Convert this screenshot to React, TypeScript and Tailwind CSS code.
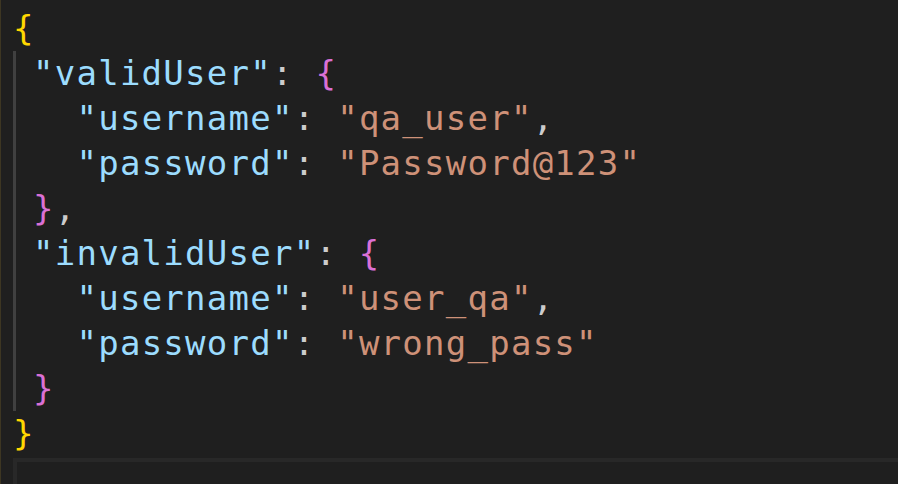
const mono = { fontFamily: '"DejaVu Sans Mono", "Liberation Mono", monospace' };

function Key({ children }: { children: string }) {
  return <span className="text-[#9cdcfe]">"{children}"</span>;
}

function Str({ children }: { children: string }) {
  return <span className="text-[#ce9178]">"{children}"</span>;
}

function P({ children }: { children: string }) {
  return <span className="text-[#cccccc]">{children}</span>;
}

function Line({ children, indent = "" }: { children: React.ReactNode; indent?: string }) {
  return (
    <div className="h-[45px] leading-[45px] whitespace-pre">
      {indent}
      {children}
    </div>
  );
}

export default function App() {
  return (
    <div className="w-[898px] h-[484px] bg-[#1f1f1f] flex overflow-hidden" style={mono}>
      <div className="w-px h-full bg-[#3d3622]" />
      <div className="flex-1 flex flex-col pt-[6px] text-[34px] tracking-[1.25px]">
        <div className="pl-[12px]">
          <Line>
            <span className="text-[#ffd700]">{"{"}</span>
          </Line>
        </div>
        <div className="ml-[12px] border-l-[3px] border-[#404040] pl-[17px]">
          <Line>
            <Key>validUser</Key>
            <P>: </P>
            <span className="text-[#da70d6]">{"{"}</span>
          </Line>
          <Line indent="  ">
            <Key>username</Key>
            <P>: </P>
            <Str>qa_user</Str>
            <P>,</P>
          </Line>
          <Line indent="  ">
            <Key>password</Key>
            <P>: </P>
            <Str>Password@123</Str>
          </Line>
          <Line>
            <span className="text-[#da70d6]">{"}"}</span>
            <P>,</P>
          </Line>
          <Line>
            <Key>invalidUser</Key>
            <P>: </P>
            <span className="text-[#da70d6]">{"{"}</span>
          </Line>
          <Line indent="  ">
            <Key>username</Key>
            <P>: </P>
            <Str>user_qa</Str>
            <P>,</P>
          </Line>
          <Line indent="  ">
            <Key>password</Key>
            <P>: </P>
            <Str>wrong_pass</Str>
          </Line>
          <Line>
            <span className="text-[#da70d6]">{"}"}</span>
          </Line>
        </div>
        <div className="pl-[12px]">
          <Line>
            <span className="text-[#ffd700]">{"}"}</span>
          </Line>
        </div>
        <div className="ml-[12px] mt-[2px] flex-1 border-l-4 border-t-4 border-[#282828]" />
      </div>
    </div>
  );
}
